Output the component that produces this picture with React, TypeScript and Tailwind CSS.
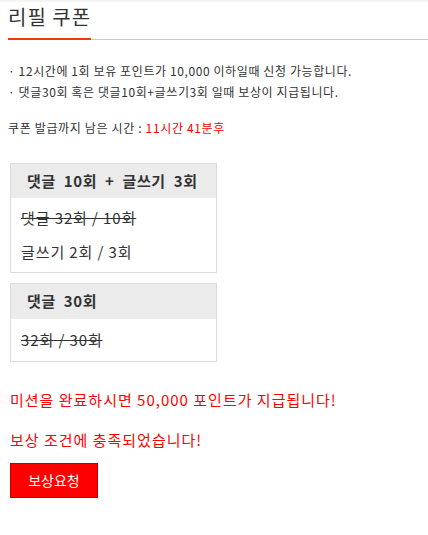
export default function App() {
    return (
        <div className="min-h-screen bg-white text-[#333333] font-['Noto_Sans_CJK_KR',sans-serif] shadow-[inset_0_3px_3px_-2px_rgba(0,0,0,0.08)]">
            {/* 타이틀 */}
            <div className="ml-2 flex border-b border-[#cccccc]">
                <h2 className="-mb-px border-b-2 border-[#ef3a0e] pt-[3px] pb-[7px] text-[20px] leading-[28px] font-normal tracking-[1px]">
                    리필 쿠폰
                </h2>
            </div>

            <ul className="mt-5 ml-2 text-[12px] leading-[21px] tracking-[0.6px]">
                <li>· 12시간에 1회 보유 포인트가 10,000 이하일때 신청 가능합니다.</li>
                <li>· 댓글30회 혹은 댓글10회+글쓰기3회 일때 보상이 지급됩니다.</li>
            </ul>

            <p className="mt-[15px] ml-2 text-[12px] leading-[21px] tracking-[0.65px]">
                쿠폰 발급까지 남은 시간 : <span className="text-[#ff0000]">11시간 41분후</span>
            </p>

            {/* 미션 박스 */}
            <div className="mt-[25px] ml-[10px] w-[207px] border border-[#dddddd]">
                <div className="flex h-[34px] items-center bg-[#ebebeb] pl-4 text-[15px] font-bold tracking-[0.6px] [word-spacing:4px]">
                    댓글 10회 + 글쓰기 3회
                </div>
                <div className="px-[10px] py-[3px] text-[15px] leading-[34px] tracking-[0.9px]">
                    <p className="line-through">댓글 32회 / 10회</p>
                    <p>글쓰기 2회 / 3회</p>
                </div>
            </div>

            <div className="mt-[10px] ml-[10px] w-[207px] border border-[#dddddd]">
                <div className="flex h-[35px] items-center bg-[#ebebeb] pl-4 text-[15px] font-bold tracking-[0.6px] [word-spacing:4px]">
                    댓글 30회
                </div>
                <div className="px-[10px] py-[4px] text-[15px] leading-[34px] tracking-[0.9px]">
                    <p className="line-through">32회 / 30회</p>
                </div>
            </div>

            <p className="mt-[27px] ml-[10px] text-[15px] leading-[22px] tracking-[1px] text-[#ff0000]">
                미션을 완료하시면 50,000 포인트가 지급됩니다!
            </p>
            <p className="mt-[18px] ml-[10px] text-[15px] leading-[22px] tracking-[1px] text-[#ff0000]">
                보상 조건에 충족되었습니다!
            </p>

            <button
                type="button"
                className="mt-3 ml-[10px] flex h-[35px] w-[88px] items-center justify-center border border-[#c00000] bg-[#ff0000] text-[14px] text-white"
            >
                보상요청
            </button>
        </div>
    );
}
